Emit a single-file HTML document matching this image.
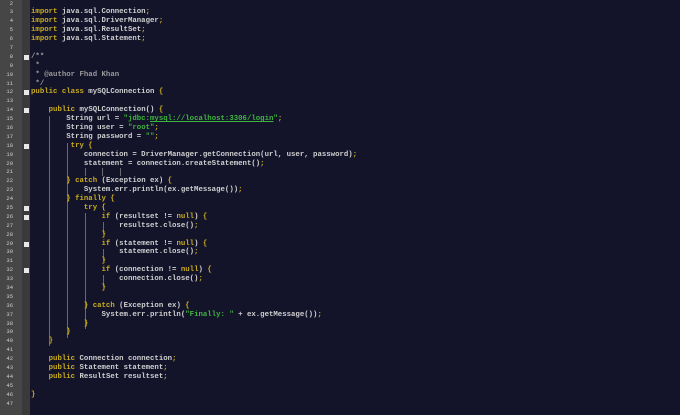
<!DOCTYPE html>
<html><head><meta charset="utf-8"><style>
html,body{margin:0;padding:0;}
body{width:680px;height:415px;overflow:hidden;background:#13132a;position:relative;font-family:"Liberation Mono",monospace;}
#g{position:absolute;left:0;top:0;width:22px;height:415px;background:#464646;}
#f{position:absolute;left:22px;top:0;width:8px;height:415px;background:#3a3a3a;}
#nums{position:absolute;left:0;top:-9.4px;width:13px;text-align:right;font-size:5.5px;line-height:8.89px;color:#cfcfcf;}
#code{position:absolute;left:31px;top:-9.4px;font-size:7.35px;line-height:8.89px;color:#d0d0d0;white-space:pre;font-weight:bold;}
.k{color:#c9ad1c}.c{color:#9a9a9a}.s{color:#3fb43f}.u{color:#3fb43f;text-decoration:underline}
.fb{position:absolute;left:24px;width:5px;height:5px;background:#e8e8e8;}
.gd{position:absolute;width:1px;background:#6a6a6a;}
</style></head><body>
<div id="g"></div><div id="f"></div>
<div id="nums">1<br>2<br>3<br>4<br>5<br>6<br>7<br>8<br>9<br>10<br>11<br>12<br>13<br>14<br>15<br>16<br>17<br>18<br>19<br>20<br>21<br>22<br>23<br>24<br>25<br>26<br>27<br>28<br>29<br>30<br>31<br>32<br>33<br>34<br>35<br>36<br>37<br>38<br>39<br>40<br>41<br>42<br>43<br>44<br>45<br>46<br>47</div>
<div class="fb" style="top:55px"></div>
<div class="fb" style="top:90px"></div>
<div class="fb" style="top:108px"></div>
<div class="fb" style="top:144px"></div>
<div class="fb" style="top:206px"></div>
<div class="fb" style="top:215px"></div>
<div class="fb" style="top:242px"></div>
<div class="fb" style="top:268px"></div>
<div class="gd" style="left:49px;top:116px;height:230px"></div>
<div class="gd" style="left:67px;top:143px;height:195px"></div>
<div class="gd" style="left:85px;top:168px;height:8px"></div>
<div class="gd" style="left:102px;top:168px;height:8px"></div>
<div class="gd" style="left:120px;top:168px;height:8px"></div>
<div class="gd" style="left:85px;top:213px;height:116px"></div>
<div class="gd" style="left:103px;top:222px;height:12px"></div>
<div class="gd" style="left:103px;top:249px;height:12px"></div>
<div class="gd" style="left:103px;top:275px;height:12px"></div>
<div id="code">

<span class="k">import</span> java.sql.Connection<span class="k">;</span>
<span class="k">import</span> java.sql.DriverManager<span class="k">;</span>
<span class="k">import</span> java.sql.ResultSet<span class="k">;</span>
<span class="k">import</span> java.sql.Statement<span class="k">;</span>

<span class="c">/**</span>
<span class="c"> *</span>
<span class="c"> * @author Fhad Khan</span>
<span class="c"> */</span>
<span class="k">public class</span> mySQLConnection <span class="k">{</span>

    <span class="k">public</span> mySQLConnection() <span class="k">{</span>
        String url = <span class="s">"jdbc:<span class="u">mysql://localhost:3306/login</span>"</span><span class="k">;</span>
        String user = <span class="s">"root"</span><span class="k">;</span>
        String password = <span class="s">""</span><span class="k">;</span>
         <span class="k">try {</span>
            connection = DriverManager.getConnection(url, user, password)<span class="k">;</span>
            statement = connection.createStatement()<span class="k">;</span>

        <span class="k">} catch</span> (Exception ex) <span class="k">{</span>
            System.err.println(ex.getMessage())<span class="k">;</span>
        <span class="k">} finally {</span>
            <span class="k">try {</span>
                <span class="k">if</span> (resultset != <span class="k">null</span>) <span class="k">{</span>
                    resultset.close()<span class="k">;</span>
                <span class="k">}</span>
                <span class="k">if</span> (statement != <span class="k">null</span>) <span class="k">{</span>
                    statement.close()<span class="k">;</span>
                <span class="k">}</span>
                <span class="k">if</span> (connection != <span class="k">null</span>) <span class="k">{</span>
                    connection.close()<span class="k">;</span>
                <span class="k">}</span>

            <span class="k">} catch</span> (Exception ex) <span class="k">{</span>
                System.err.println(<span class="s">"Finally: "</span> + ex.getMessage())<span class="k">;</span>
            <span class="k">}</span>
        <span class="k">}</span>
    <span class="k">}</span>

    <span class="k">public</span> Connection connection<span class="k">;</span>
    <span class="k">public</span> Statement statement<span class="k">;</span>
    <span class="k">public</span> ResultSet resultset<span class="k">;</span>

<span class="k">}</span>
</div>
</body></html>
